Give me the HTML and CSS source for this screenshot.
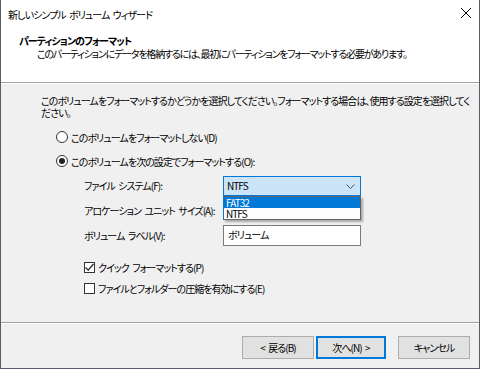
FILE: index.html
```html
<!DOCTYPE html>
<html lang="ja">
<head>
<meta charset="utf-8">
<link rel="stylesheet" href="styles.css">
</head>
<body>
<div class="window">
  <div class="titlebar">
    <span class="title">新しいシンプル ボリューム ウィザード</span>
    <svg class="close" width="12" height="12" viewBox="0 0 12 12"><path d="M1 1 L11 11 M11 1 L1 11" stroke="#000" stroke-width="1" fill="none"/></svg>
  </div>
  <div class="header">
    <div class="h-title">パーティションのフォーマット</div>
    <div class="h-sub">このパーティションにデータを格納するには、最初にパーティションをフォーマットする必要があります。</div>
  </div>
  <div class="content">
    <p class="intro">このボリュームをフォーマットするかどうかを選択してください。フォーマットする場合は、使用する設定を選択してく<br>ださい。</p>
    <div class="option"><span class="radio"></span><span>このボリュームをフォーマットしない(D)</span></div>
    <div class="option"><span class="radio on"></span><span>このボリュームを次の設定でフォーマットする(O):</span></div>
    <div class="fields">
      <div class="field">
        <span class="label">ファイル システム(F):</span>
        <div class="combo active">
          <span>NTFS</span>
          <svg class="chev" width="9" height="5" viewBox="0 0 9 5"><path d="M0.5 0.5 L4.5 4.5 L8.5 0.5" stroke="#555" stroke-width="1" fill="none"/></svg>
          <div class="dropdown">
            <div class="item sel">FAT32</div>
            <div class="item">NTFS</div>
          </div>
        </div>
      </div>
      <div class="field">
        <span class="label">アロケーション ユニット サイズ(A):</span>
        <div class="combo hidden"></div>
      </div>
      <div class="field">
        <span class="label">ボリューム ラベル(V):</span>
        <div class="textbox">ボリューム</div>
      </div>
      <div class="check first"><span class="box"><svg width="11" height="11" viewBox="0 0 11 11"><path d="M1.5 5.5 L4.2 8.2 L9.5 2" stroke="#222" stroke-width="1.2" fill="none"/></svg></span><span>クイック フォーマットする(P)</span></div>
      <div class="check"><span class="box"></span><span>ファイルとフォルダーの圧縮を有効にする(E)</span></div>
    </div>
  </div>
  <div class="footer">
    <button class="btn back">&lt; 戻る(B)</button>
    <button class="btn next">次へ(N) &gt;</button>
    <button class="btn cancel">キャンセル</button>
  </div>
</div>
</body>
</html>
```
FILE: styles.css
```css
* { box-sizing: border-box; }
html, body { margin: 0; padding: 0; }
body {
  font-family: "Noto Sans CJK JP", "Noto Sans", sans-serif;
  font-size: 10px;
  letter-spacing: -0.95px;
  word-spacing: 2px;
  font-feature-settings: "palt";
  color: #000;
  background: #fff;
}
.window {
  width: 480px;
  height: 369px;
  border-left: 1px solid #565e6c;
  border-right: 1px solid #565e6c;
  border-bottom: 1px solid #565e6c;
  display: flex;
  flex-direction: column;
  background: #f0f0f0;
  white-space: nowrap;
}
.titlebar {
  height: 28px;
  background: #fff;
  display: flex;
  align-items: center;
  justify-content: space-between;
  padding: 0 7px 0 7px;
}
.title { line-height: 13px; }
.close { margin-top: -2px; }
.header {
  background: #fff;
  height: 55px;
  border-bottom: 1px solid #a0a0a0;
  box-shadow: 0 1px 0 #fff;
  padding: 6px 0 0 18px;
}
.h-title { font-weight: bold; line-height: 13px; }
.h-sub { padding-left: 18px; line-height: 13px; letter-spacing: -1.2px; }
.content {
  flex: 1;
  padding: 12px 0 0 40px;
  border-bottom: 1px solid #a0a0a0;
  box-shadow: 0 1px 0 #fff;
}
.intro { margin: 0; line-height: 12px; }
.option {
  display: flex;
  align-items: center;
  gap: 3px;
  margin-left: 15px;
  height: 24px;
}
.option:first-of-type { margin-top: 6px; }
.radio {
  width: 12px;
  height: 12px;
  border: 1px solid #333;
  border-radius: 50%;
  background: #fff;
  display: flex;
  align-items: center;
  justify-content: center;
}
.radio.on::after {
  content: "";
  width: 6px;
  height: 6px;
  border-radius: 50%;
  background: #222;
}
.fields { margin-left: 43px; }
.field {
  display: flex;
  align-items: center;
  height: 25px;
}
.label { width: 139px; }
.combo {
  position: relative;
  width: 138px;
  height: 20px;
  display: flex;
  align-items: center;
  justify-content: space-between;
  padding: 0 5px 0 3px;
  border: 1px solid #0078d7;
  background: #cce4f7;
}
.combo.hidden { visibility: hidden; }
.chev { margin-top: 1px; }
.dropdown {
  position: absolute;
  top: 19px;
  left: -1px;
  width: 138px;
  background: #fff;
  border: 1px solid #646464;
  border-left-color: #0078d7;
  box-shadow: 2px 2px 2px rgba(0,0,0,0.3);
  z-index: 2;
}
.item { height: 11px; line-height: 11px; padding-left: 2px; }
.item.sel { background: #0078d7; color: #fff; }
.textbox {
  width: 138px;
  height: 21px;
  border: 1px solid #7a7a7a;
  background: #fff;
  padding: 2px 0 0 4px;
  line-height: 13px;
}
.check {
  display: flex;
  align-items: center;
  gap: 3px;
  height: 21px;
}
.check.first { margin-top: 9px; }
.box {
  width: 11px;
  height: 11px;
  border: 1px solid #333;
  background: #fff;
  display: flex;
  align-items: center;
  justify-content: center;
}
.box svg { flex: none; }
.footer {
  height: 45px;
  display: flex;
  align-items: flex-start;
  padding: 13px 9px 0 0;
  justify-content: flex-end;
}
.btn {
  font: inherit;
  letter-spacing: inherit;
  word-spacing: inherit;
  font-feature-settings: "palt";
  height: 23px;
  width: 72px;
  background: #e1e1e1;
  border: 1px solid #adadad;
  color: #000;
  padding: 0;
}
.next { border: 2px solid #0078d7; width: 70px; margin-left: 2px; }
.cancel { margin-left: 12px; }
```
